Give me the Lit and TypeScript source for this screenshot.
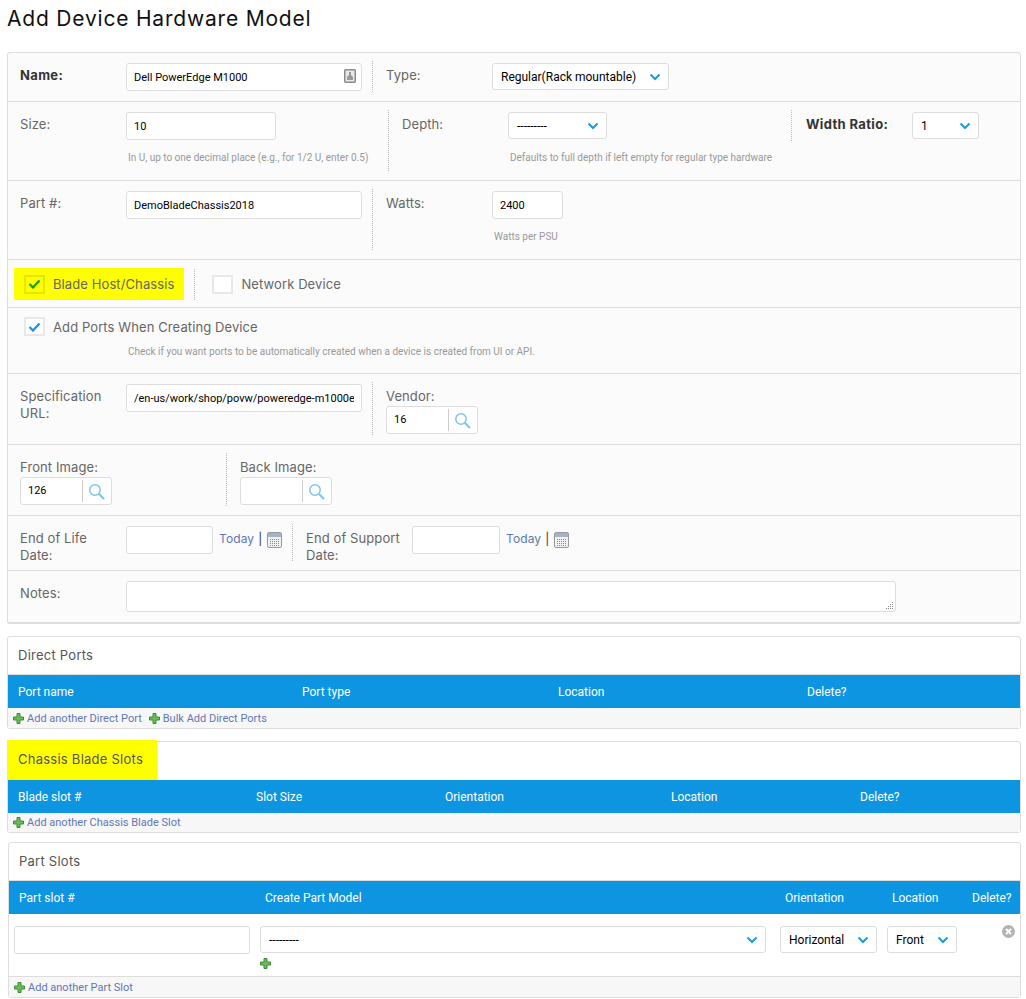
import {LitElement, html, css} from 'lit';
import {customElement} from 'lit/decorators.js';

const chevron = html`<svg class="chev" width="12" height="8" viewBox="0 0 12 8"><path d="M1.5 1.5 6 6l4.500-4.500" fill="none" stroke="#1a9ae6" stroke-width="2"/></svg>`;

const plus = html`<svg class="plus" width="11" height="11" viewBox="0 0 11 11"><path d="M4 .5h3V4h3.500v3H7v3.500H4V7H.5V4H4z" fill="#6cbb5a" stroke="#3d8b37"/></svg>`;

const magnifier = html`<svg width="17" height="17" viewBox="0 0 17 17"><circle cx="7" cy="7" r="5.200" fill="none" stroke="#7cc4ee" stroke-width="1.500"/><path d="m11 11 5 5" stroke="#7cc4ee" stroke-width="2"/></svg>`;

const calendar = html`<svg class="cal" width="15" height="16" viewBox="0 0 15 16">
  <rect x=".5" y=".5" width="14" height="15" rx="1.500" fill="#f2f2f2" stroke="#999"/>
  <rect x="1" y="1" width="13" height="4" fill="#a3b4c6"/>
  <path d="M3 7.500h9M3 9.500h9M3 11.500h9M3 13.500h9" stroke="#888" stroke-dasharray="1 1"/>
</svg>`;

const badge = html`<svg class="badge" width="12" height="14" viewBox="0 0 12 14">
  <rect x=".75" y=".75" width="10.500" height="12.500" rx="1" fill="#e8e8e8" stroke="#8a8a8a" stroke-width="1.500"/>
  <path d="M5 3h2v3l2 2v3H3V8l2-2z" fill="#999"/>
</svg>`;

const grip = html`<svg class="grip" width="9" height="9" viewBox="0 0 9 9"><path d="M7 1h1v1H7zM5 3h1v1H5zM7 3h1v1H7zM3 5h1v1H3zM5 5h1v1H5zM7 5h1v1H7zM1 7h1v1H1zM3 7h1v1H3zM5 7h1v1H5zM7 7h1v1H7z" fill="#888"/></svg>`;

const removeIcon = html`<svg class="remove" width="13" height="13" viewBox="0 0 13 13"><circle cx="6.500" cy="6.500" r="6.500" fill="#b3b3b3"/><path d="m4 4 5 5M9 4 4 9" stroke="#fff" stroke-width="2"/></svg>`;

@customElement('app-root')
export class AppRoot extends LitElement {
  static styles = css`
    :host {
      display: block;
      font-family: 'Inter', 'Liberation Sans', sans-serif;
      font-size: 13px;
      letter-spacing: 0.1px;
      color: #666;
    }

    h1 {
      margin: 0;
      padding: 7px 7px 0;
      height: 52px;
      box-sizing: border-box;
      font-size: 21px;
      font-weight: 400;
      line-height: 24px;
      letter-spacing: 0.8px;
      color: #111;
    }

    .form {
      margin: 0 5px 0 7px;
      background: #fbfbfb;
      border: 1px solid #ddd;
      border-bottom-width: 2px;
      border-radius: 3px;
    }

    .row {
      display: flex;
      padding: 8px 0 9px 12px;
      border-bottom: 1px solid #ddd;
    }

    .row.last {
      border-bottom: 0;
      padding-bottom: 10px;
    }

    .cell {
      display: flex;
      align-items: flex-start;
      box-sizing: border-box;
      min-height: 31px;
      padding-top: 2px;
      border-right: 1px dotted #bbb;
      margin-right: 13px;
    }

    .cell.plain {
      border-right: 0;
      margin-right: 0;
    }

    .c-name { width: 353px; }
    .c-tall { width: 353px; height: 61px; }
    .c-size { width: 369px; height: 61px; }
    .c-depth { width: 390px; height: 31px; margin-right: 14px; }
    .c-url { width: 353px; height: 53px; }
    .c-front { width: 207px; height: 53px; }
    .c-eol { width: 273px; height: 37px; }
    .c-eos { height: 37px; }

    .label {
      width: 106px;
      flex: none;
      box-sizing: border-box;
      padding: 4px 8px 0 0;
      line-height: 17px;
    }

    .label b {
      color: #333;
      letter-spacing: 0.35px;
    }

    .field-label {
      padding-top: 4px;
      margin-bottom: 1px;
      line-height: 17px;
    }

    .stack {
      display: flex;
      flex-direction: column;
    }

    input,
    textarea,
    .select {
      box-sizing: border-box;
      height: 28px;
      border: 1px solid #ddd;
      border-radius: 3px;
      background: #fff;
      font-family: 'Roboto', sans-serif;
      font-size: 11px;
      letter-spacing: 0;
      color: #000;
      padding: 0 7px;
      outline: none;
    }

    .w236 { width: 236px; }
    .w150 { width: 150px; }
    .w71 { width: 71px; }
    .w87 { width: 87px; }
    .w88 { width: 88px; }

    .notes {
      position: relative;
    }

    textarea {
      display: block;
      width: 770px;
      height: 31px;
      margin: 0;
      resize: none;
    }

    .grip {
      position: absolute;
      right: 2px;
      bottom: 2px;
    }

    .select {
      display: flex;
      align-items: center;
      justify-content: space-between;
      height: 27px;
      padding: 0 7px 0 8px;
      font-size: 12px;
    }

    .s-type { width: 177px; }
    .s-depth { width: 99px; }
    .s-ratio { width: 67px; }
    .s-model { width: 506px; }
    .s-orient { width: 97px; margin-left: 4px; }
    .s-loc { width: 70px; }

    .help {
      font-family: 'Roboto', sans-serif;
      font-size: 10px;
      line-height: 12px;
      letter-spacing: 0;
      color: #999;
      margin: 12px 0 0 2px;
      white-space: nowrap;
    }

    .help.under-select {
      margin-top: 13px;
    }

    .name-input {
      position: relative;
      width: 236px;
    }

    .name-input input {
      width: 100%;
    }

    .badge {
      position: absolute;
      right: 6px;
      top: 6px;
    }

    .lookup {
      display: flex;
      align-items: center;
      box-sizing: border-box;
      width: 92px;
      height: 28px;
      border: 1px solid #ddd;
      border-radius: 3px;
      background: #fff;
      font-family: 'Roboto', sans-serif;
      font-size: 11px;
      letter-spacing: 0;
      color: #000;
    }

    .lookup span {
      box-sizing: border-box;
      width: 62px;
      height: 22px;
      line-height: 22px;
      padding-left: 7px;
      border-right: 1px solid #ccc;
    }

    .lookup svg {
      margin-left: 5px;
    }

    .check-row {
      padding: 8px 0 7px 6px;
      align-items: center;
    }

    .mark {
      display: flex;
      align-items: center;
      height: 32px;
    }

    .mark.hl {
      background: #ff0;
      padding: 0 10px;
      margin-right: 10px;
    }

    .box {
      box-sizing: border-box;
      width: 21px;
      height: 19px;
      border: 2px solid #e8e8e8;
      background: #fff;
      display: flex;
      align-items: center;
      justify-content: center;
      margin-right: 8px;
    }

    .hl .box {
      background: transparent;
      border-color: #e5e500;
    }

    .divider {
      width: 0;
      height: 31px;
      border-right: 1px dotted #bbb;
      margin-right: 17px;
    }

    .ports-row {
      display: block;
      padding: 9px 0 0 16px;
      height: 66px;
      box-sizing: border-box;
    }

    .ports-row .mark {
      height: 19px;
    }

    .ports-row .help {
      margin: 10px 0 0 104px;
    }

    .today {
      color: #5f78b4;
      font-size: 12px;
      margin-left: 6px;
      line-height: 26px;
      white-space: nowrap;
    }

    .pipe {
      color: #333;
      font-size: 12px;
      margin: 0 5px 0 4px;
      line-height: 26px;
    }

    .cal {
      margin-top: 6px;
    }

    .panel {
      margin: 12px 5px 0 7px;
      border: 1px solid #ddd;
      border-radius: 3px;
      background: #fff;
    }

    .panel.part {
      margin: 9px 5px 0 8px;
    }

    .panel-title {
      box-sizing: border-box;
      height: 38px;
      line-height: 36px;
      padding-left: 10px;
      font-size: 13px;
      letter-spacing: 0.25px;
      color: #555;
      border-bottom: 1px solid #ddd;
    }

    .panel-title.hl {
      background: #ff0;
      width: 150px;
      margin: -2px 0 0 -1px;
      height: 40px;
      line-height: 38px;
      padding-left: 11px;
    }

    .thead {
      display: grid;
      height: 33px;
      align-items: center;
      padding-left: 10px;
      background: #0e95e2;
      color: #fff;
      font-family: 'Roboto', sans-serif;
      font-size: 12px;
      letter-spacing: 0;
    }

    .cols-ports { grid-template-columns: 284px 256px 249px 1fr; }
    .cols-blades { grid-template-columns: 238px 189px 226px 189px 1fr; }
    .cols-parts { grid-template-columns: 246px 520px 107px 80px 1fr; }

    .tfoot {
      display: flex;
      align-items: center;
      height: 20px;
      padding-left: 5px;
      background: #f7f7f7;
      font-family: 'Roboto', sans-serif;
      font-size: 11px;
      letter-spacing: 0;
      color: #5f78b4;
    }

    .tfoot.short {
      height: 19px;
    }

    .tfoot .plus {
      margin-right: 3px;
    }

    .tfoot .plus:not(:first-child) {
      margin-left: 7px;
    }

    .trow {
      position: relative;
      display: flex;
      gap: 10px;
      height: 63px;
      padding: 12px 5px 0;
      box-sizing: border-box;
      border-bottom: 1px solid #ddd;
    }

    .add-model {
      margin-top: 3px;
    }

    .remove {
      position: absolute;
      right: 5px;
      top: 11px;
    }
  `;

  render() {
    return html`
      <h1>Add Device Hardware Model</h1>
      <div class="form">
        <div class="row">
          <div class="cell c-name">
            <div class="label"><b>Name:</b></div>
            <div class="name-input"><input value="Dell PowerEdge M1000" />${badge}</div>
          </div>
          <div class="cell plain">
            <div class="label">Type:</div>
            <div class="select s-type">Regular(Rack mountable)${chevron}</div>
          </div>
        </div>
        <div class="row">
          <div class="cell c-size">
            <div class="label">Size:</div>
            <div class="stack">
              <input class="w150" value="10" />
              <div class="help">In U, up to one decimal place (e.g., for 1/2 U, enter 0.5)</div>
            </div>
          </div>
          <div class="cell c-depth">
            <div class="label">Depth:</div>
            <div class="stack">
              <div class="select s-depth">---------${chevron}</div>
              <div class="help under-select">Defaults to full depth if left empty for regular type hardware</div>
            </div>
          </div>
          <div class="cell plain">
            <div class="label"><b>Width Ratio:</b></div>
            <div class="select s-ratio">1${chevron}</div>
          </div>
        </div>
        <div class="row">
          <div class="cell c-tall">
            <div class="label">Part #:</div>
            <input class="w236" value="DemoBladeChassis2018" />
          </div>
          <div class="cell plain">
            <div class="label">Watts:</div>
            <div class="stack">
              <input class="w71" value="2400" />
              <div class="help">Watts per PSU</div>
            </div>
          </div>
        </div>
        <div class="row check-row">
          <div class="mark hl">
            <span class="box"><svg width="13" height="10" viewBox="0 0 13 10"><path d="m1.500 5 3.500 3.500 6.500-7" fill="none" stroke="#1c9a12" stroke-width="2.200"/></svg></span>
            Blade Host/Chassis
          </div>
          <div class="divider"></div>
          <div class="mark"><span class="box"></span>Network Device</div>
        </div>
        <div class="row ports-row">
          <div class="mark">
            <span class="box"><svg width="13" height="10" viewBox="0 0 13 10"><path d="m1.500 5 3.500 3.500 6.500-7" fill="none" stroke="#1a90e0" stroke-width="2.200"/></svg></span>
            Add Ports When Creating Device
          </div>
          <div class="help">Check if you want ports to be automatically created when a device is created from UI or API.</div>
        </div>
        <div class="row">
          <div class="cell c-url">
            <div class="label">Specification URL:</div>
            <input class="w236" value="/en-us/work/shop/povw/poweredge-m1000e" />
          </div>
          <div class="cell plain">
            <div class="stack">
              <div class="field-label">Vendor:</div>
              <div class="lookup"><span>16</span>${magnifier}</div>
            </div>
          </div>
        </div>
        <div class="row">
          <div class="cell c-front">
            <div class="stack">
              <div class="field-label">Front Image:</div>
              <div class="lookup"><span>126</span>${magnifier}</div>
            </div>
          </div>
          <div class="cell plain">
            <div class="stack">
              <div class="field-label">Back Image:</div>
              <div class="lookup"><span></span>${magnifier}</div>
            </div>
          </div>
        </div>
        <div class="row">
          <div class="cell c-eol">
            <div class="label">End of Life Date:</div>
            <input class="w87" />
            <span class="today">Today</span><span class="pipe">|</span>${calendar}
          </div>
          <div class="cell plain c-eos">
            <div class="label">End of Support Date:</div>
            <input class="w88" />
            <span class="today">Today</span><span class="pipe">|</span>${calendar}
          </div>
        </div>
        <div class="row last">
          <div class="cell plain">
            <div class="label">Notes:</div>
            <div class="notes"><textarea></textarea>${grip}</div>
          </div>
        </div>
      </div>

      <div class="panel">
        <div class="panel-title">Direct Ports</div>
        <div class="thead cols-ports">
          <span>Port name</span><span>Port type</span><span>Location</span><span>Delete?</span>
        </div>
        <div class="tfoot">${plus}Add another Direct Port ${plus}Bulk Add Direct Ports</div>
      </div>

      <div class="panel">
        <div class="panel-title hl">Chassis Blade Slots</div>
        <div class="thead cols-blades">
          <span>Blade slot #</span><span>Slot Size</span><span>Orientation</span><span>Location</span><span>Delete?</span>
        </div>
        <div class="tfoot short">${plus}Add another Chassis Blade Slot</div>
      </div>

      <div class="panel part">
        <div class="panel-title">Part Slots</div>
        <div class="thead cols-parts">
          <span>Part slot #</span><span>Create Part Model</span><span>Orientation</span><span>Location</span><span>Delete?</span>
        </div>
        <div class="trow">
          <input class="w236" />
          <div class="stack">
            <div class="select s-model">---------${chevron}</div>
            <div class="add-model">${plus}</div>
          </div>
          <div class="select s-orient">Horizontal${chevron}</div>
          <div class="select s-loc">Front${chevron}</div>
          ${removeIcon}
        </div>
        <div class="tfoot">${plus}Add another Part Slot</div>
      </div>
    `;
  }
}
